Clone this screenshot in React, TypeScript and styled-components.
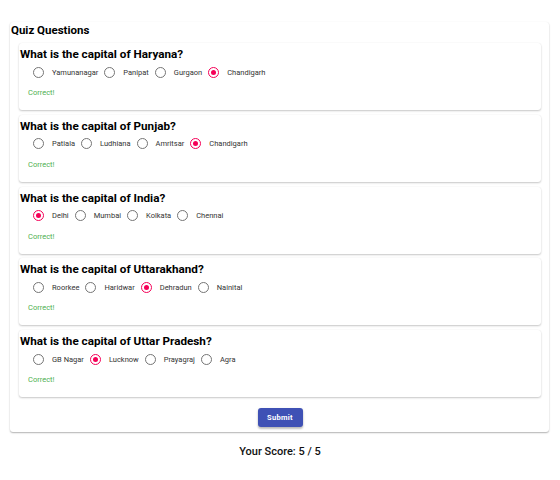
import React, { useState } from 'react';
import styled, { createGlobalStyle } from 'styled-components';

const GlobalStyle = createGlobalStyle`
	body {
		margin: 0;
		background: #fff;
		font-family: Roboto, 'Liberation Sans', sans-serif;
	}
`;

const questions = [
	{ q: 'What is the capital of Haryana?', options: ['Yamunanagar', 'Panipat', 'Gurgaon', 'Chandigarh'], answer: 'Chandigarh' },
	{ q: 'What is the capital of Punjab?', options: ['Patiala', 'Ludhiana', 'Amritsar', 'Chandigarh'], answer: 'Chandigarh' },
	{ q: 'What is the capital of India?', options: ['Delhi', 'Mumbai', 'Kolkata', 'Chennai'], answer: 'Delhi' },
	{ q: 'What is the capital of Uttarakhand?', options: ['Roorkee', 'Haridwar', 'Dehradun', 'Nainital'], answer: 'Dehradun' },
	{ q: 'What is the capital of Uttar Pradesh?', options: ['GB Nagar', 'Lucknow', 'Prayagraj', 'Agra'], answer: 'Lucknow' },
];

const Page = styled.div`
	padding: 22px 11px 0 10px;
`;

const Paper = styled.div`
	background: #fff;
	border-radius: 3px;
	box-shadow: 0 1px 2px rgba(0, 0, 0, 0.2), 0 1px 1px rgba(0, 0, 0, 0.12), 0 0 1px rgba(0, 0, 0, 0.06);
	padding: 0 8px 5px 9px;
`;

const Heading = styled.h2`
	margin: 0 0 5px -8px;
	font-size: 11.5px;
	line-height: 16px;
	font-weight: 700;
	color: #000;
`;

const List = styled.div`
	display: flex;
	flex-direction: column;
	gap: 4.75px;
`;

const Card = styled.div`
	height: 67px;
	box-sizing: border-box;
	padding: 3px 0 12px 0;
	border-radius: 3px;
	background: #fff;
	box-shadow: 0 1px 2px rgba(0, 0, 0, 0.22), 0 0 1px rgba(0, 0, 0, 0.08);
`;

const Question = styled.div`
	font-size: 11.7px;
	line-height: 16px;
	font-weight: 700;
	color: #000;
	padding-left: 1px;
`;

const Options = styled.div`
	display: flex;
	align-items: center;
	height: 20px;
	padding-left: 14px;
	gap: 6px;
`;

const Option = styled.label`
	display: flex;
	align-items: center;
	gap: 8px;
	cursor: pointer;
	font-size: 7.5px;
	color: #333;
`;

const Circle = styled.span<{ $on: boolean }>`
	width: 11px;
	height: 11px;
	box-sizing: border-box;
	border-radius: 50%;
	border: 1.3px solid ${(p) => (p.$on ? '#f50057' : '#757575')};
	display: flex;
	align-items: center;
	justify-content: center;
	&::after {
		content: '';
		width: 5px;
		height: 5px;
		border-radius: 50%;
		background: #f50057;
		display: ${(p) => (p.$on ? 'block' : 'none')};
	}
`;

const Result = styled.div<{ $ok: boolean }>`
	margin-top: 6px;
	padding-left: 9px;
	font-size: 7.5px;
	line-height: 10px;
	color: ${(p) => (p.$ok ? '#4caf50' : '#f44336')};
`;

const Actions = styled.div`
	display: flex;
	justify-content: center;
	padding-top: 11px;
`;

const SubmitButton = styled.button`
	width: 45px;
	height: 19px;
	border: none;
	border-radius: 3px;
	background: #3f51b5;
	color: #fff;
	font-family: Roboto, sans-serif;
	font-weight: 700;
	font-size: 7.5px;
	letter-spacing: 0.3px;
	box-shadow: 0 2px 2px rgba(0, 0, 0, 0.2), 0 1px 3px rgba(0, 0, 0, 0.12);
	cursor: pointer;
	padding: 0;
`;

const Score = styled.div`
	margin-top: 13px;
	text-align: center;
	font-size: 11px;
	line-height: 14px;
	font-weight: 500;
	color: #111;
	padding-left: 1px;
`;

export default function App() {
	const [picked, setPicked] = useState<string[]>(questions.map((q) => q.answer));
	const score = questions.filter((q, i) => picked[i] === q.answer).length;

	return (
		<Page>
			<GlobalStyle />
			<Paper>
				<Heading>Quiz Questions</Heading>
				<List>
					{questions.map((q, i) => (
						<Card key={q.q}>
							<Question>{q.q}</Question>
							<Options>
								{q.options.map((o) => (
									<Option
										key={o}
										onClick={() => setPicked(picked.map((p, j) => (j === i ? o : p)))}
									>
										<Circle $on={picked[i] === o} />
										{o}
									</Option>
								))}
							</Options>
							<Result $ok={picked[i] === q.answer}>
								{picked[i] === q.answer ? 'Correct!' : 'Incorrect!'}
							</Result>
						</Card>
					))}
				</List>
				<Actions>
					<SubmitButton>Submit</SubmitButton>
				</Actions>
			</Paper>
			<Score>
				Your Score: {score} / {questions.length}
			</Score>
		</Page>
	);
}
